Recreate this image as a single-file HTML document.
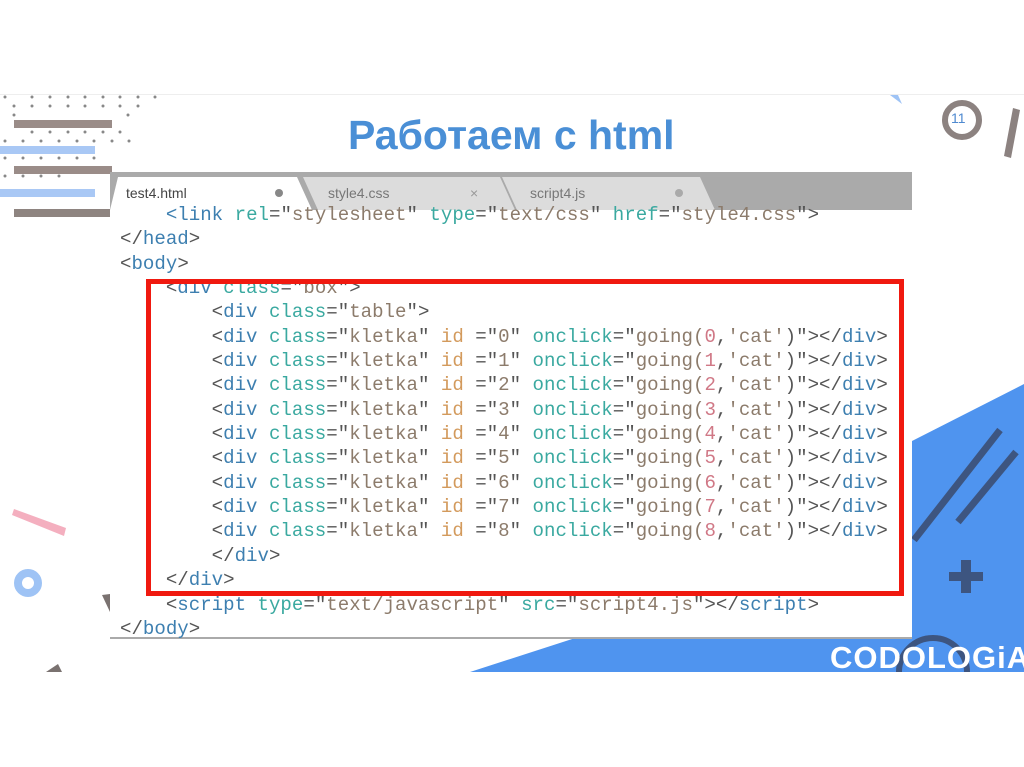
<!DOCTYPE html>
<html><head><meta charset="utf-8"><style>
body{margin:0;width:1024px;height:767px;background:#fff;position:relative;overflow:hidden;font-family:"Liberation Sans",sans-serif}
.a{position:absolute}
.code{position:absolute;left:120px;font-family:"Liberation Mono",monospace;font-size:19.1px;white-space:pre;line-height:24.35px;color:#555}
.t{color:#3d7fb0}.n{color:#3aa9a0}.s{color:#8c7b6b}.i{color:#d39a5c}.d{color:#d07886}
</style></head><body>
<div class="a" style="left:0;top:94px;width:1024px;height:1px;background:#eee"></div>
<svg class="a" style="left:0;top:0" width="1024" height="767">
<g fill="#888">
<circle cx="5" cy="97" r="1.5"/><circle cx="32" cy="97" r="1.5"/><circle cx="50" cy="97" r="1.5"/><circle cx="68" cy="97" r="1.5"/><circle cx="85" cy="97" r="1.5"/><circle cx="103" cy="97" r="1.5"/><circle cx="120" cy="97" r="1.5"/><circle cx="138" cy="97" r="1.5"/><circle cx="155" cy="97" r="1.5"/>
<circle cx="14" cy="106" r="1.5"/><circle cx="32" cy="106" r="1.5"/><circle cx="50" cy="106" r="1.5"/><circle cx="68" cy="106" r="1.5"/><circle cx="85" cy="106" r="1.5"/><circle cx="103" cy="106" r="1.5"/><circle cx="120" cy="106" r="1.5"/><circle cx="138" cy="106" r="1.5"/>
<circle cx="14" cy="115" r="1.5"/><circle cx="128" cy="115" r="1.5"/>
<circle cx="32" cy="132" r="1.5"/><circle cx="50" cy="132" r="1.5"/><circle cx="68" cy="132" r="1.5"/><circle cx="85" cy="132" r="1.5"/><circle cx="103" cy="132" r="1.5"/><circle cx="120" cy="132" r="1.5"/>
<circle cx="5" cy="141" r="1.5"/><circle cx="23" cy="141" r="1.5"/><circle cx="41" cy="141" r="1.5"/><circle cx="59" cy="141" r="1.5"/><circle cx="77" cy="141" r="1.5"/><circle cx="94" cy="141" r="1.5"/><circle cx="112" cy="141" r="1.5"/><circle cx="129" cy="141" r="1.5"/>
<circle cx="5" cy="158" r="1.5"/><circle cx="23" cy="158" r="1.5"/><circle cx="41" cy="158" r="1.5"/><circle cx="59" cy="158" r="1.5"/><circle cx="77" cy="158" r="1.5"/><circle cx="94" cy="158" r="1.5"/>
<circle cx="5" cy="176" r="1.5"/><circle cx="23" cy="176" r="1.5"/><circle cx="41" cy="176" r="1.5"/><circle cx="59" cy="176" r="1.5"/>
</g>
<rect x="14" y="120" width="98" height="8" fill="#9a8c88"/>
<rect x="0" y="146" width="95" height="8" fill="#a9c8f5"/>
<rect x="14" y="166" width="98" height="8" fill="#9a8c88"/>
<rect x="0" y="189" width="95" height="8" fill="#a9c8f5"/>
<rect x="14" y="209" width="98" height="8" fill="#8e8480"/>
<polygon points="12,515 14,509 66,528 64,536" fill="#f4afbf"/>
<circle cx="28" cy="583" r="10" fill="none" stroke="#9ec3f5" stroke-width="8"/>
<polygon points="102,595 110,594 110,612" fill="#7a7270"/>
<polygon points="46,672 58,664 62,672" fill="#7a7270"/>
<polygon points="890,95 898,95 902,104" fill="#9ec3f5"/>
<circle cx="962" cy="120" r="17" fill="none" stroke="#8c8280" stroke-width="6"/>
<polygon points="1013,108 1020,110 1011,158 1004,156" fill="#8c8280"/>
<polygon points="912,441 1024,384 1024,672 912,672" fill="#4f94ef"/>
<polygon points="470,672 600,630 1024,630 1024,672" fill="#4f94ef"/>
<line x1="1000" y1="430" x2="914" y2="540" stroke="#3d5580" stroke-width="7"/>
<line x1="1016" y1="452" x2="958" y2="522" stroke="#3d5580" stroke-width="7"/>
<rect x="949" y="572" width="34" height="9" fill="#3d5580"/>
<rect x="961" y="560" width="10" height="33" fill="#3d5580"/>
<circle cx="933" cy="672" r="34" fill="none" stroke="#3d5580" stroke-width="6"/>
</svg>
<div class="a" style="left:0;top:672px;width:1024px;height:95px;background:#fff"></div>
<div class="a" style="left:830px;top:640px;font-size:31px;font-weight:bold;color:#fff;letter-spacing:1px">CODOLOGiA</div>
<div class="a" style="left:951px;top:110px;font-size:14px;color:#4f8ad0">11</div>
<div class="a" style="left:348px;top:112px;font-size:41px;font-weight:bold;color:#4a8fd6">Работаем с html</div>
<div class="a" style="left:110px;top:210px;width:802px;height:428px;background:#fff"></div>
<div class="a" style="left:110px;top:637px;width:802px;height:2px;background:#aaa"></div>
<div class="a" style="left:110px;top:172px;width:802px;height:38px;background:#aaa"></div>
<svg class="a" style="left:110px;top:172px" width="802" height="38">
<polygon points="392,5 590,5 605,38 407,38" fill="#dcdcdc"/>
<polygon points="193,5 390,5 405,38 208,38" fill="#dcdcdc"/>
<polygon points="0,38 8,5 187,5 202,38" fill="#fff"/>
<circle cx="169" cy="21" r="4" fill="#888"/>
<text x="360" y="26" font-size="14" fill="#999" font-family="Liberation Sans">×</text>
<circle cx="569" cy="21" r="4" fill="#aaa"/>
<text x="16" y="26" font-size="14" fill="#444" font-family="Liberation Sans">test4.html</text>
<text x="218" y="26" font-size="14" fill="#777" font-family="Liberation Sans">style4.css</text>
<text x="420" y="26" font-size="14" fill="#777" font-family="Liberation Sans">script4.js</text>
</svg>
<div class="code" style="top:203px">    <span class="t">&lt;link</span> <span class="n">rel</span>="<span class="s">stylesheet</span>" <span class="n">type</span>="<span class="s">text/css</span>" <span class="n">href</span>="<span class="s">style4.css</span>"&gt;
&lt;/<span class="t">head</span>&gt;
&lt;<span class="t">body</span>&gt;
    &lt;<span class="t">div</span> <span class="n">class</span>="<span class="s">box</span>"&gt;
        &lt;<span class="t">div</span> <span class="n">class</span>="<span class="s">table</span>"&gt;
        &lt;<span class="t">div</span> <span class="n">class</span>="<span class="s">kletka</span>" <span class="i">id</span> ="<span class="s">0</span>" <span class="n">onclick</span>="<span class="s">going(</span><span class="d">0</span>,<span class="s">'cat'</span>)"&gt;&lt;/<span class="t">div</span>&gt;
        &lt;<span class="t">div</span> <span class="n">class</span>="<span class="s">kletka</span>" <span class="i">id</span> ="<span class="s">1</span>" <span class="n">onclick</span>="<span class="s">going(</span><span class="d">1</span>,<span class="s">'cat'</span>)"&gt;&lt;/<span class="t">div</span>&gt;
        &lt;<span class="t">div</span> <span class="n">class</span>="<span class="s">kletka</span>" <span class="i">id</span> ="<span class="s">2</span>" <span class="n">onclick</span>="<span class="s">going(</span><span class="d">2</span>,<span class="s">'cat'</span>)"&gt;&lt;/<span class="t">div</span>&gt;
        &lt;<span class="t">div</span> <span class="n">class</span>="<span class="s">kletka</span>" <span class="i">id</span> ="<span class="s">3</span>" <span class="n">onclick</span>="<span class="s">going(</span><span class="d">3</span>,<span class="s">'cat'</span>)"&gt;&lt;/<span class="t">div</span>&gt;
        &lt;<span class="t">div</span> <span class="n">class</span>="<span class="s">kletka</span>" <span class="i">id</span> ="<span class="s">4</span>" <span class="n">onclick</span>="<span class="s">going(</span><span class="d">4</span>,<span class="s">'cat'</span>)"&gt;&lt;/<span class="t">div</span>&gt;
        &lt;<span class="t">div</span> <span class="n">class</span>="<span class="s">kletka</span>" <span class="i">id</span> ="<span class="s">5</span>" <span class="n">onclick</span>="<span class="s">going(</span><span class="d">5</span>,<span class="s">'cat'</span>)"&gt;&lt;/<span class="t">div</span>&gt;
        &lt;<span class="t">div</span> <span class="n">class</span>="<span class="s">kletka</span>" <span class="i">id</span> ="<span class="s">6</span>" <span class="n">onclick</span>="<span class="s">going(</span><span class="d">6</span>,<span class="s">'cat'</span>)"&gt;&lt;/<span class="t">div</span>&gt;
        &lt;<span class="t">div</span> <span class="n">class</span>="<span class="s">kletka</span>" <span class="i">id</span> ="<span class="s">7</span>" <span class="n">onclick</span>="<span class="s">going(</span><span class="d">7</span>,<span class="s">'cat'</span>)"&gt;&lt;/<span class="t">div</span>&gt;
        &lt;<span class="t">div</span> <span class="n">class</span>="<span class="s">kletka</span>" <span class="i">id</span> ="<span class="s">8</span>" <span class="n">onclick</span>="<span class="s">going(</span><span class="d">8</span>,<span class="s">'cat'</span>)"&gt;&lt;/<span class="t">div</span>&gt;
        &lt;/<span class="t">div</span>&gt;
    &lt;/<span class="t">div</span>&gt;
    &lt;<span class="t">script</span> <span class="n">type</span>="<span class="s">text/javascript</span>" <span class="n">src</span>="<span class="s">script4.js</span>"&gt;&lt;/<span class="t">script</span>&gt;
&lt;/<span class="t">body</span>&gt;</div>
<div class="a" style="left:146px;top:279px;width:748px;height:307px;border:5px solid #f0190f"></div>
</body></html>
